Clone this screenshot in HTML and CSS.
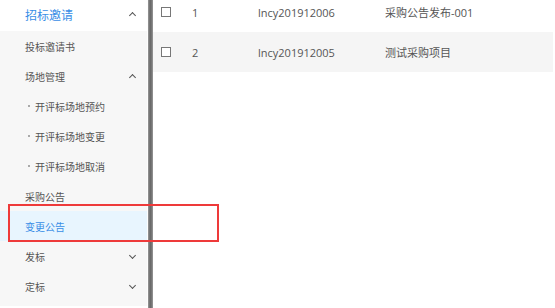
FILE: index.html
```html
<!DOCTYPE html>
<html lang="zh-CN">
<head>
    <meta charset="UTF-8">
    <title>招标邀请</title>
    <link rel="stylesheet" href="styles.css">
</head>
<body>
    <div class="page">
        <!-- 左侧菜单 -->
        <aside class="side">
            <div class="menu-title">
                <span>招标邀请</span>
                <span class="arrow up"></span>
            </div>
            <div class="menu-item">投标邀请书</div>
            <div class="menu-item">
                <span>场地管理</span>
                <span class="arrow up"></span>
            </div>
            <div class="menu-item sub">开评标场地预约</div>
            <div class="menu-item sub">开评标场地变更</div>
            <div class="menu-item sub">开评标场地取消</div>
            <div class="menu-item">采购公告</div>
            <div class="menu-item active">变更公告</div>
            <div class="menu-item">
                <span>发标</span>
                <span class="arrow down"></span>
            </div>
            <div class="menu-item">
                <span>定标</span>
                <span class="arrow down"></span>
            </div>
        </aside>
        <div class="divider"></div>

        <!-- 列表 -->
        <main class="main">
            <div class="table">
                <div class="row">
                    <span class="cell check"><i class="box"></i></span>
                    <span class="cell num">1</span>
                    <span class="cell code">lncy201912006</span>
                    <span class="cell name">采购公告发布-001</span>
                </div>
                <div class="row stripe">
                    <span class="cell check"><i class="box"></i></span>
                    <span class="cell num">2</span>
                    <span class="cell code">lncy201912005</span>
                    <span class="cell name">测试采购项目</span>
                </div>
            </div>
        </main>

        <!-- 标注框 -->
        <div class="mark"></div>
    </div>
</body>
</html>
```

FILE: styles.css
```css
* {
    box-sizing: border-box;
}

body {
    margin: 0;
    background: #fff;
    font-family: "Open Sans", "Noto Sans CJK SC", sans-serif;
    color: #606266;
}

.page {
    position: relative;
    display: flex;
    height: 308px;
    overflow: hidden;
}

/* 左侧菜单 */
.side {
    width: 148px;
    height: 306px;
    background: #f7f7f7;
    border-right: 1px solid #fdfdfd;
    font-family: "Noto Sans CJK SC", sans-serif;
}

.menu-title {
    display: flex;
    justify-content: space-between;
    align-items: center;
    height: 31px;
    padding: 0 12px 2px 25px;
    background: #fff;
    color: #3a8ee6;
    font-size: 12px;
}

.menu-item {
    display: flex;
    justify-content: space-between;
    align-items: center;
    height: 30px;
    padding: 0 12px 0 25px;
    font-size: 10px;
    color: #555;
}

.menu-item.sub {
    padding-left: 35px;
    position: relative;
}

.menu-item.sub::before {
    content: "";
    position: absolute;
    left: 28px;
    top: 14px;
    width: 2px;
    height: 2px;
    background: #aaa;
}

.menu-item.active {
    background: #e8f5fe;
    color: #3a8ee6;
}

.arrow {
    width: 5px;
    height: 5px;
    border-left: 1.4px solid #555;
    border-top: 1.4px solid #555;
}

.arrow.up {
    transform: translateY(1px) rotate(45deg);
}

.arrow.down {
    transform: translateY(-1px) rotate(225deg);
}

.divider {
    width: 5px;
    background: linear-gradient(to right, #999, #6a6a6a 40%, #6a6a6a 60%, #999);
}

/* 列表 */
.main {
    flex: 1;
    padding-right: 2px;
}

.table {
    margin-top: -8px;
}

.row {
    display: flex;
    align-items: center;
    height: 40px;
    font-size: 11px;
    color: #555;
}

.row.stripe {
    background: #f5f5f5;
}

.cell.check {
    width: 39px;
    padding-left: 8px;
    display: flex;
}

.box {
    display: block;
    width: 10px;
    height: 10px;
    border: 1px solid #777;
    background: #fff;
}

.cell.num {
    width: 66px;
}

.cell.code {
    width: 127px;
}

/* 红色标注框 */
.mark {
    position: absolute;
    left: 8px;
    top: 204px;
    width: 211px;
    height: 38px;
    border: 2px solid #ee3a3a;
}
```
